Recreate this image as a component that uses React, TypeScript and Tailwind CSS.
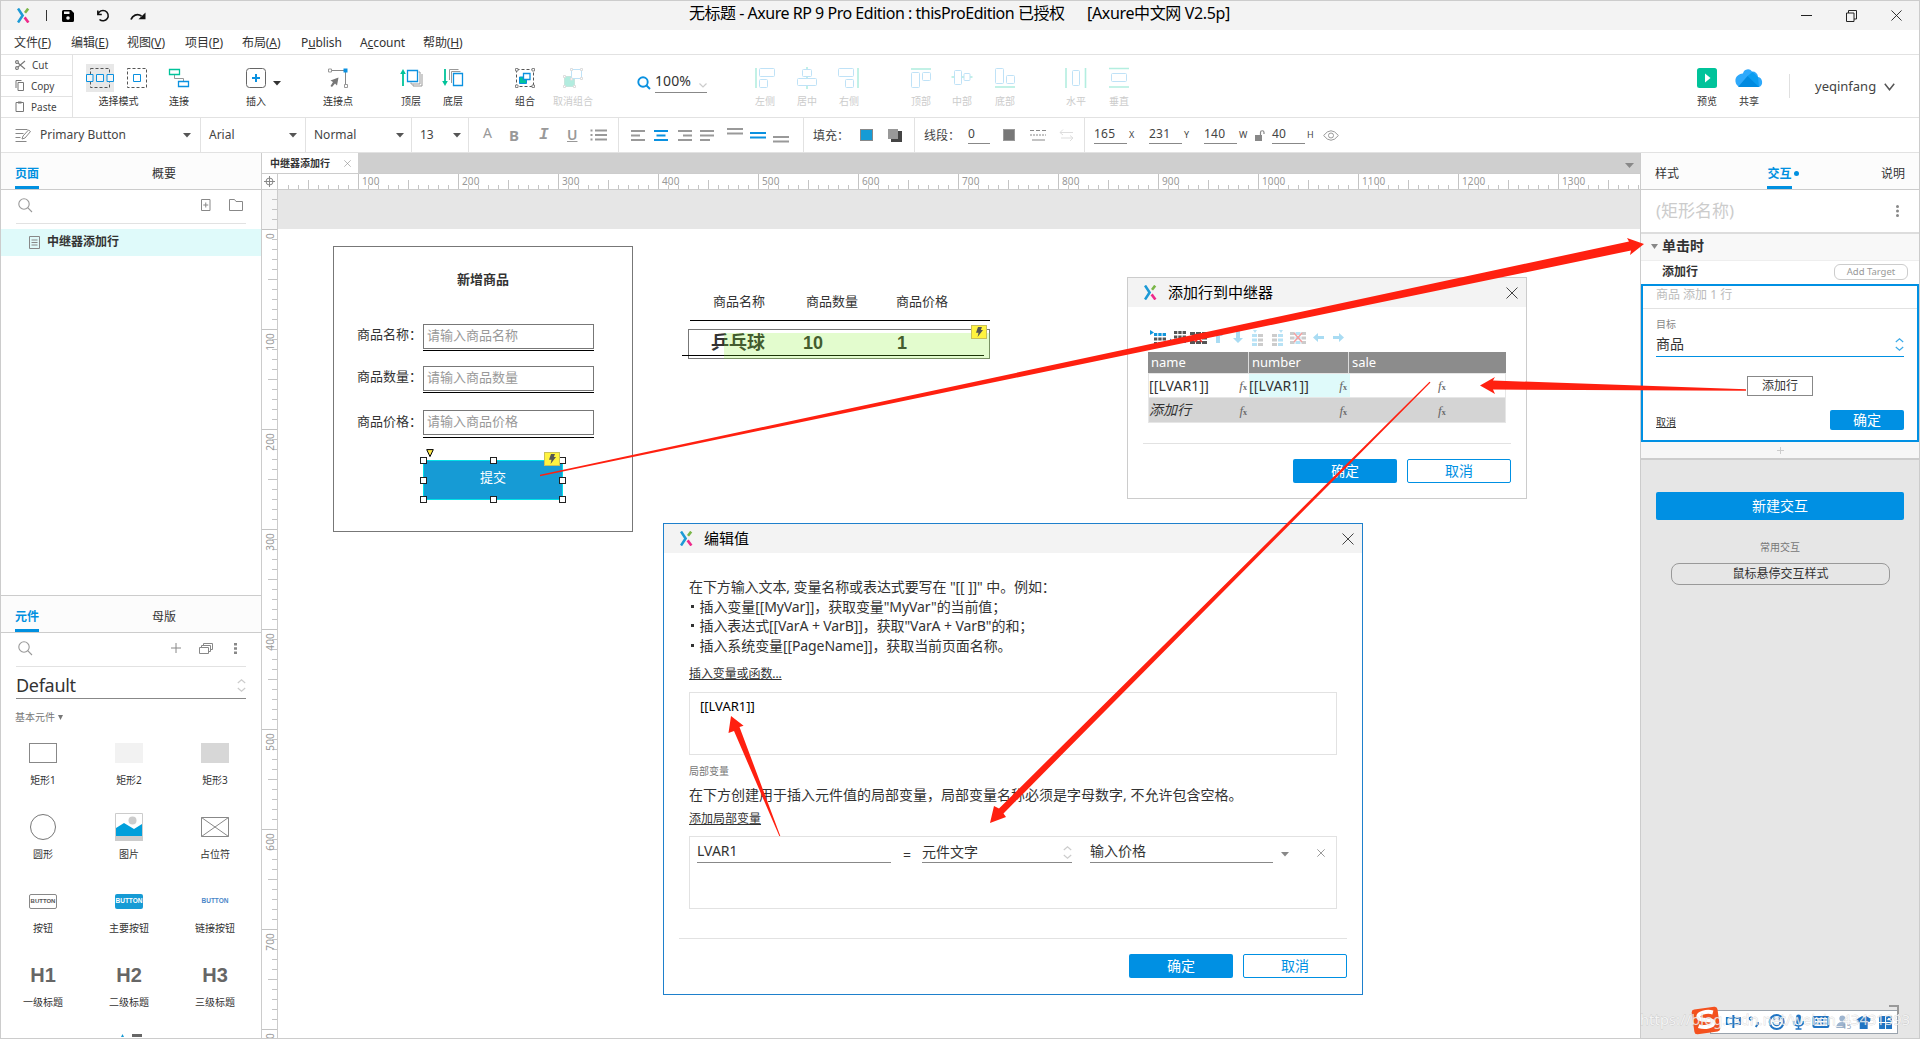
import type { ReactNode } from "react";

const xTicks = Array.from({ length: 136 }, (_, i) => i + 3);
const yTicks = Array.from({ length: 84 }, (_, i) => i - 3);

const widgets = [
  { id: "rect1", label: "矩形1" },
  { id: "rect2", label: "矩形2" },
  { id: "rect3", label: "矩形3" },
  { id: "circle", label: "圆形" },
  { id: "image", label: "图片" },
  { id: "placeholder", label: "占位符" },
  { id: "button", label: "按钮" },
  { id: "primary", label: "主要按钮" },
  { id: "link", label: "链接按钮" },
  { id: "h1", label: "一级标题" },
  { id: "h2", label: "二级标题" },
  { id: "h3", label: "三级标题" },
];

const formRows = [
  { label: "商品名称：", hint: "请输入商品名称", labelTop: "top-[98px]", inputTop: "top-[95px]", lineTop: "top-[121px]" },
  { label: "商品数量：", hint: "请输入商品数量", labelTop: "top-[140px]", inputTop: "top-[137px]", lineTop: "top-[163px]" },
  { label: "商品价格：", hint: "请输入商品价格", labelTop: "top-[185px]", inputTop: "top-[181px]", lineTop: "top-[208px]" },
];

const handles = [
  "left-[162px] top-[228px]",
  "left-[232px] top-[228px]",
  "left-[301px] top-[228px]",
  "left-[162px] top-[248px]",
  "left-[301px] top-[248px]",
  "left-[162px] top-[267px]",
  "left-[232px] top-[267px]",
  "left-[301px] top-[267px]",
];

function Logo() {
  return (
    <svg width="13" height="15" viewBox="0 0 13 15" fill="none" strokeWidth="2.6">
      <path d="M1 .5 5.600 7.500 1 14.500" stroke="#1d9ad6" />
      <path d="M8 4.800 11.200 .6" stroke="#7ab648" />
      <path d="M7.600 9.400 11.400 14.500" stroke="#ee2a8b" />
    </svg>
  );
}

function Caret({ color = "#555" }: { color?: string }) {
  return (
    <svg width="8" height="5" viewBox="0 0 8 5" className="shrink-0">
      <path d="M0 0h8L4 4.600z" fill={color} />
    </svg>
  );
}

function UpDown({ color = "#ccc" }: { color?: string }) {
  return (
    <svg width="9" height="13" viewBox="0 0 9 13" fill="none" stroke={color} strokeWidth="1.2" className="shrink-0">
      <path d="M.8 4 4.500.8 8.200 4M.8 9l3.700 3.200L8.200 9" />
    </svg>
  );
}

function SearchIcon() {
  return (
    <svg width="15" height="15" viewBox="0 0 15 15" fill="none" stroke="#999" strokeWidth="1.1">
      <circle cx="6" cy="6" r="5.200" />
      <path d="m9.700 9.700 4.300 4.300" />
    </svg>
  );
}

function CloseX({ size = 12, color = "#444" }: { size?: number; color?: string }) {
  return (
    <svg width={size} height={size} viewBox="0 0 12 12" stroke={color} strokeWidth="1" fill="none">
      <path d="m.5.5 11 11M11.500.5l-11 11" />
    </svg>
  );
}

function Bolt({ className }: { className: string }) {
  return (
    <div className={`absolute flex h-[14px] w-4 items-center justify-center border border-[#c9c05a] bg-[#fff33f] ${className}`}>
      <svg width="7" height="10" viewBox="0 0 7 10">
        <path d="M2 0h4L4.800 3H7L1.600 10l.9-4.300H0z" fill="#555" />
      </svg>
    </div>
  );
}

function Tool({ className, label, dim, children }: { className: string; label?: string; dim?: boolean; children: ReactNode }) {
  return (
    <div className={`flex shrink-0 flex-col items-center ${className}`}>
      <div className="flex h-7 items-center">{children}</div>
      <div className={`mt-[4px] h-[10px] text-[10px] leading-[10px] ${dim ? "text-[#ccc]" : "text-[#333]"}`}>{label}</div>
    </div>
  );
}

function Icon28({ children }: { children: ReactNode }) {
  return (
    <svg width="28" height="28" viewBox="0 0 28 28" fill="none">
      {children}
    </svg>
  );
}

function Title() {
  return (
    <div className="flex h-[29px] items-center bg-[#f3f3f3] pl-4">
      <Logo />
      <div className="ml-4 h-[11px] w-px bg-[#333]" />
      <svg className="ml-[15px]" width="12" height="12" viewBox="0 0 12 12">
        <path d="M0 1.500A1.500 1.500 0 0 1 1.500 0H9l3 3v7.500A1.500 1.500 0 0 1 10.500 12h-9A1.500 1.500 0 0 1 0 10.500z" fill="#000" />
        <path d="M2 1.500h5.500V4H2z" fill="#f3f3f3" />
        <circle cx="6" cy="8" r="1.800" fill="#f3f3f3" />
      </svg>
      <svg className="ml-[22px]" width="14" height="13" viewBox="0 0 14 13" fill="none" stroke="#111" strokeWidth="1.500">
        <path d="M2 5.200A5.200 5.200 0 1 1 3.500 10.500M1.800 1.500v4h4" />
      </svg>
      <svg className="ml-[20px]" width="16" height="10" viewBox="0 0 16 10">
        <path d="M1 8.500C2.500 4.500 7 2 11.500 5" fill="none" stroke="#111" strokeWidth="1.800" />
        <path d="M15.500 1.500V8.300H8.500z" fill="#111" />
      </svg>
      <div className="ml-[543px] w-[398px] pb-[5px] text-[16px] leading-5 tracking-[-0.48px] text-black">
        无标题 - Axure RP 9 Pro Edition : thisProEdition 已授权
      </div>
      <div className="pb-[5px] text-[16px] leading-5 tracking-[-0.35px] text-black">[Axure中文网 V2.5p]</div>
      <div className="ml-auto flex items-center gap-[34px] pr-[17px]">
        <div className="h-px w-[11px] bg-[#222]" />
        <svg width="11" height="12" viewBox="0 0 11 12" fill="none" stroke="#222">
          <path d="M.5 3h7.500v8.500H.5zM2.500 3V.5h8V9H8" />
        </svg>
        <CloseX size={11} color="#222" />
      </div>
    </div>
  );
}

function Menu() {
  const items = [
    { name: "文件", k: "F", w: "w-[57px]" },
    { name: "编辑", k: "E", w: "w-[56px]" },
    { name: "视图", k: "V", w: "w-[58px]" },
    { name: "项目", k: "P", w: "w-[57px]" },
    { name: "布局", k: "A", w: "w-[59px]" },
  ];
  return (
    <div className="flex h-[25px] items-center border-b border-[#e2e2e2] pl-[13px] pt-[2px] text-xs tracking-[-0.1px] text-[#333]">
      {items.map((m) => (
        <div key={m.k} className={`shrink-0 ${m.w}`}>
          {m.name}(<u>{m.k}</u>)
        </div>
      ))}
      <div className="w-[59px]">P<u>u</u>blish</div>
      <div className="w-[63px]">A<u>c</u>count</div>
      <div>帮助(<u>H</u>)</div>
    </div>
  );
}

function Toolbar() {
  return (
    <div className="flex h-[63px] border-b border-[#e2e2e2]">
      <div className="flex w-[72px] flex-col border-r border-[#e2e2e2] text-[10px] leading-[14px] text-[#444]">
        <div className="flex h-[21px] items-center border-b border-[#e2e2e2] pb-px pl-[14px]">
          <svg width="11" height="10" viewBox="0 0 11 10" fill="none" stroke="#777" strokeWidth="1.1">
            <circle cx="2" cy="2" r="1.400" />
            <circle cx="2" cy="8" r="1.400" />
            <path d="M3 3l7 6M3 7l7-6" />
          </svg>
          <span className="ml-[6px]">Cut</span>
        </div>
        <div className="flex h-[21px] items-center border-b border-[#e2e2e2] pb-px pl-[14px]">
          <svg width="10" height="11" viewBox="0 0 10 11" fill="none" stroke="#777">
            <path d="M3 2.500h5.500v8H3zM1 8V.5h5.500" />
          </svg>
          <span className="ml-[6px]">Copy</span>
        </div>
        <div className="flex h-[20px] items-center pb-px pl-[14px]">
          <svg width="10" height="11" viewBox="0 0 10 11" fill="none" stroke="#777">
            <path d="M1 1.500h7.500v9H1z" />
            <path d="M3 1.500h3.500" strokeWidth="2" />
          </svg>
          <span className="ml-[6px]">Paste</span>
        </div>
      </div>

      <div className="flex pt-[9px]">
        <Tool className="ml-[13px] w-[65px]" label="选择模式">
          <div className="flex gap-[9px]">
            <div className="bg-[#e8e8e8]">
              <Icon28>
                <path d="M4.500 4.500h19v19h-19z" stroke="#555" strokeDasharray="3 2" />
                <path d="M.5 10.500h6.500v7H.5zM10.500 10.500h7v7h-7zM21 10.500h6.500v7H21z" stroke="#0a91e0" fill="#f4f4f4" />
              </Icon28>
            </div>
            <Icon28>
              <path d="M4.500 4.500h19v19h-19z" stroke="#555" strokeDasharray="3 2" />
              <path d="M10.500 10.500h7v7h-7z" stroke="#0a91e0" />
            </Icon28>
          </div>
        </Tool>
        <Tool className="ml-[14px] w-7" label="连接">
          <Icon28>
            <path d="M9.500 10v4.500h9V18" stroke="#999" />
            <path d="M4.500 5.500h10v5h-10z" stroke="#00c39a" strokeWidth="1.300" />
            <path d="M13.500 17.500h10v5h-10z" stroke="#0a91e0" strokeWidth="1.300" />
          </Icon28>
        </Tool>
        <Tool className="ml-[49px] w-7" label="插入">
          <Icon28>
            <rect x="4.500" y="4.500" width="19" height="19" rx="3" stroke="#666" />
            <path d="M14 10v8M10 14h8" stroke="#0a91e0" strokeWidth="2" />
          </Icon28>
        </Tool>
        <Tool className="ml-[2px] w-[9px]">
          <div className="pt-[11px]"><Caret color="#333" /></div>
        </Tool>
        <Tool className="ml-[37px] w-10" label="连接点">
          <Icon28>
            <path d="M6 6.500h15.500V22" stroke="#888" />
            <path d="M4.500 5h3v3h-3zM20.500 20.500h3v3h-3z" stroke="#999" fill="#fff" />
            <path d="M19.500 4.500h4v4h-4z" fill="#0a91e0" />
            <path d="M14.500 13.500 6.500 16.500l2.500 1.500-2.500 4 1.500 1 3-3.500 2 2z" fill="#777" />
          </Icon28>
        </Tool>
        <Tool className="ml-[39px] w-7" label="顶层">
          <Icon28>
            <path d="M6 22V9" stroke="#00c39a" strokeWidth="1.800" />
            <path d="M3.200 10 6 5l2.800 5z" fill="#00c39a" />
            <path d="M14 18.500v1.500h9V8h-1.500M16 20.500v1.500h9V10" stroke="#999" />
            <path d="M10.500 6.500h10v11h-10z" stroke="#0a91e0" strokeWidth="1.300" fill="#fff" />
          </Icon28>
        </Tool>
        <Tool className="ml-[14px] w-7" label="底层">
          <Icon28>
            <path d="M6 5v13" stroke="#00c39a" strokeWidth="1.800" />
            <path d="M3.200 17 6 22l2.800-5z" fill="#00c39a" />
            <path d="M10.500 16V5.500h9M12.500 19V7.500h9" stroke="#999" />
            <path d="M14.500 9.500h9v12h-9z" stroke="#0a91e0" strokeWidth="1.300" fill="#fff" />
          </Icon28>
        </Tool>
        <Tool className="ml-[44px] w-7" label="组合">
          <Icon28>
            <path d="M5.500 5.500h17v17h-17z" stroke="#555" strokeDasharray="3 2" />
            <path d="M8.500 13h7v6.500h-7z" fill="#00c39a" stroke="#0a91e0" />
            <path d="M12.500 9.500h6.500v6h-6.500z" fill="#fff" stroke="#0a91e0" strokeWidth="1.300" />
            <path d="M4.500 4.500h2.500v2.500H4.500zM21 4.500h2.500v2.500H21zM4.500 21h2.500v2.500H4.500zM21 21h2.500v2.500H21z" stroke="#888" fill="#fff" />
          </Icon28>
        </Tool>
        <Tool className="ml-[12px] w-11" label="取消组合" dim>
          <Icon28>
            <path d="M5.500 12.500h10v10h-10z" fill="#b2ecdf" stroke="#c5e6dd" />
            <path d="M12.500 5.500h10v9h-10z" fill="#fff" stroke="#bfe2f7" />
            <path d="M11.500 4.500h2v2h-2zM21.500 4.500h2v2h-2zM21.500 13.500h2v2h-2zM4.500 11.500h2v2h-2zM4.500 21.500h2v2h-2zM14.500 21.500h2v2h-2zM11.500 14h2v2h-2z" stroke="#ddd" fill="#fff" />
          </Icon28>
        </Tool>

        <div className="ml-[42px] flex h-[29px] w-[70px] items-start">
          <svg className="mt-[12px] shrink-0" width="14" height="14" viewBox="0 0 14 14" fill="none" stroke="#0a91e0" strokeWidth="1.900">
            <circle cx="6" cy="6" r="4.700" />
            <path d="m9.500 9.500 3.500 3.500" />
          </svg>
          <div className="ml-[4px] flex h-[29px] w-[52px] items-center justify-between border-b border-[#888] pt-[5px] text-sm text-[#333]">
            <span className="tracking-[0.1px]">100%</span>
            <svg className="mt-[9px]" width="8" height="5" viewBox="0 0 8 5" fill="none" stroke="#ccc" strokeWidth="1.200">
              <path d="m.5.5 3.500 3.500L7.500.5" />
            </svg>
          </div>
        </div>

        <Tool className="ml-[44px] w-7" label="左侧" dim>
          <Icon28>
            <path d="M5 4v20" stroke="#b3eee0" strokeWidth="1.600" />
            <rect x="8.500" y="4.500" width="15" height="8" rx="1" stroke="#bfe2f7" />
            <rect x="8.500" y="15.500" width="8" height="8" rx="1" stroke="#bfe2f7" />
          </Icon28>
        </Tool>
        <Tool className="ml-[14px] w-7" label="居中" dim>
          <Icon28>
            <path d="M14 3v22" stroke="#b3eee0" strokeWidth="1.600" />
            <rect x="9.500" y="5.500" width="9" height="7" rx="1" stroke="#bfe2f7" fill="#fff" />
            <rect x="4.500" y="14.500" width="19" height="7" rx="1" stroke="#bfe2f7" fill="#fff" />
          </Icon28>
        </Tool>
        <Tool className="ml-[14px] w-7" label="右侧" dim>
          <Icon28>
            <path d="M23 4v20" stroke="#b3eee0" strokeWidth="1.600" />
            <rect x="3.500" y="4.500" width="15" height="8" rx="1" stroke="#bfe2f7" />
            <rect x="10.500" y="15.500" width="8" height="8" rx="1" stroke="#bfe2f7" />
          </Icon28>
        </Tool>
        <Tool className="ml-[44px] w-7" label="顶部" dim>
          <Icon28>
            <path d="M4 5h20" stroke="#b3eee0" strokeWidth="1.600" />
            <rect x="4.500" y="8.500" width="8" height="15" rx="1" stroke="#bfe2f7" />
            <rect x="15.500" y="8.500" width="8" height="8" rx="1" stroke="#bfe2f7" />
          </Icon28>
        </Tool>
        <Tool className="ml-[13px] w-7" label="中部" dim>
          <Icon28>
            <path d="M3.500 13h21" stroke="#b3eee0" strokeWidth="1.600" />
            <rect x="6.500" y="6.500" width="7" height="14" rx="1" stroke="#bfe2f7" fill="#fff" />
            <rect x="16" y="9.500" width="6" height="7" rx="1" stroke="#bfe2f7" fill="#fff" />
          </Icon28>
        </Tool>
        <Tool className="ml-[15px] w-7" label="底部" dim>
          <Icon28>
            <path d="M4 23h20" stroke="#b3eee0" strokeWidth="1.600" />
            <rect x="4.500" y="4.500" width="8" height="15" rx="1" stroke="#bfe2f7" />
            <rect x="15.500" y="11.500" width="8" height="8" rx="1" stroke="#bfe2f7" />
          </Icon28>
        </Tool>
        <Tool className="ml-[43px] w-7" label="水平" dim>
          <Icon28>
            <path d="M4 4v20M23.500 4v20" stroke="#b3eee0" strokeWidth="1.600" />
            <rect x="10.500" y="6.500" width="7" height="15" rx="1" stroke="#bfe2f7" />
          </Icon28>
        </Tool>
        <Tool className="ml-[15px] w-7" label="垂直" dim>
          <Icon28>
            <path d="M4 4.500h20M4 23h20" stroke="#b3eee0" strokeWidth="1.600" />
            <rect x="6.500" y="9.500" width="15" height="8" rx="1" stroke="#bfe2f7" />
          </Icon28>
        </Tool>

        <Tool className="ml-[560px] w-7" label="预览">
          <Icon28>
            <rect x="4" y="4" width="20" height="20" rx="2.500" fill="#00c39a" />
            <path d="M12 9.500 17.500 14 12 18.500z" fill="#fff" />
          </Icon28>
        </Tool>
        <Tool className="ml-[13px] w-[30px]" label="共享">
          <svg width="30" height="28" viewBox="0 0 30 28">
            <path d="M6 23A6 6.500 0 0 1 4.500 11 6 6 0 0 1 9 9.500 5 5 0 0 1 18 7.500 5.500 5.500 0 0 1 24 13 5.300 5.300 0 0 1 25 23z" fill="#2ea9fb" />
            <path d="M13.500 12 18.500 8 24 13 25 23H14z" fill="#0b9df0" />
            <path d="M4 23 13.500 12 25 23z" fill="#008ae0" />
          </svg>
        </Tool>
        <div className="ml-[25px] mt-[10px] h-6 w-px bg-[#e0e0e0]" />
        <div className="ml-[25px] flex h-[45px] items-center text-[13px] text-[#444]">
          <span className="w-[69px]">yeqinfang</span>
          <svg width="11" height="8" viewBox="0 0 11 8" fill="none" stroke="#555" strokeWidth="1.500">
            <path d="m.8.8 4.700 5.900L10.200.8" />
          </svg>
        </div>
      </div>
    </div>
  );
}

function NumField({ value, unit, w }: { value: string; unit: string; w: string }) {
  return (
    <div className={`flex h-[18px] shrink-0 items-end ${w}`}>
      <div className="flex h-[18px] w-[33px] items-start border-b border-[#888] leading-[16px] tracking-[0.2px]">{value}</div>
      <span className="ml-[2px] pb-[4px] text-[9px] leading-[10px]">{unit}</span>
    </div>
  );
}

function FormatBar() {
  return (
    <div className="flex h-[35px] items-stretch border-b border-[#e2e2e2] text-xs text-[#444]">
      <div className="flex w-[200px] items-center border-r border-[#e2e2e2] pl-[14px]">
        <svg width="16" height="15" viewBox="0 0 16 15" fill="none" stroke="#888">
          <path d="M.5 1.500h12M.5 5.500h8M.5 9.500h5M.5 13.500h11M7 11l1-3 5.500-6 2 1.500-5.500 6.500z" />
        </svg>
        <span className="ml-[9px] w-[143px] pb-px">Primary Button</span>
        <Caret />
      </div>
      <div className="flex w-[105px] items-center border-r border-[#e2e2e2] pl-[8px]">
        <span className="w-[80px] pb-px">Arial</span>
        <Caret />
      </div>
      <div className="flex w-[106px] items-center border-r border-[#e2e2e2] pl-2">
        <span className="w-[82px] pb-px">Normal</span>
        <Caret />
      </div>
      <div className="flex w-[57px] items-center border-r border-[#e2e2e2] pl-[8px]">
        <span className="w-[33px] pb-px">13</span>
        <Caret />
      </div>
      <div className="flex w-[150px] items-center border-r border-[#e2e2e2] pl-[14px] text-[#999]">
        <span className="w-[26px] pb-1 text-sm leading-none">A</span>
        <span className="w-[30px] text-[15px] font-bold leading-none">B</span>
        <span className="w-[28px] font-['Liberation_Mono'] text-[16px] font-bold italic leading-none">I</span>
        <span className="w-[23px] text-[14px] font-semibold leading-none underline">U</span>
        <svg width="17" height="12" viewBox="0 0 17 12" stroke="#999" strokeWidth="1.800">
          <path d="M5 1.500h12M5 6h12M5 10.500h12M.5 1.500h2M.5 6h2M.5 10.500h2" />
        </svg>
      </div>
      <div className="flex w-[185px] items-center border-r border-[#e2e2e2] pl-3">
        <svg width="160" height="16" viewBox="0 0 160 16" strokeWidth="2">
          <path d="M0 4h14M0 8.500h9M0 13h14M47 4h14M52 8.500h9M47 13h14M69 4h14M69 8.500h14M69 13h10" stroke="#999" />
          <path d="M23 4h14M25.500 8.500h9M23 13h14M119 6h16M119 10.500h16" stroke="#0a91e0" />
          <path d="M96 2h16M96 6.500h16M142 10h16M142 14.500h16" stroke="#999" />
        </svg>
      </div>
      <div className="flex w-[111px] items-center border-r border-[#e2e2e2] pl-[9px]">
        <span className="w-[47px] pt-px">填充：</span>
        <div className="h-3 w-[13px] border border-[#888] bg-[#169bd5]" />
        <svg className="ml-[15px]" width="14" height="14" viewBox="0 0 14 14">
          <path d="M3 3h11v11H3z" fill="#444" />
          <path d="M0 1h10v10H0z" fill="#999" />
        </svg>
      </div>
      <div className="flex w-[170px] items-center border-r border-[#e2e2e2] pl-[9px]">
        <span className="w-[44px] pt-px">线段：</span>
        <div className="h-[18px] w-[22px] border-b border-[#888] leading-[16px]">0</div>
        <div className="ml-[13px] h-3 w-3 border border-[#999] bg-[#777]" />
        <svg className="ml-[15px]" width="45" height="12" viewBox="0 0 45 12" fill="none">
          <path d="M0 1.500h16" stroke="#888" strokeDasharray="4 2" />
          <path d="M0 6h16" stroke="#888" strokeDasharray="2 1" />
          <path d="M2 11h13" stroke="#888" />
          <path d="M33 .5 30 3.500l3 2.500M30 3.500h13M40 6.500l3 2.500-3 3M43 9H31" stroke="#ddd" />
        </svg>
      </div>
      <div className="flex items-center pl-[9px]">
        <NumField value="165" unit="X" w="w-[55px]" />
        <NumField value="231" unit="Y" w="w-[55px]" />
        <NumField value="140" unit="W" w="w-[51px]" />
        <svg className="mr-[7px]" width="10" height="11" viewBox="0 0 10 11">
          <path d="M0 5h7v6H0z" fill="#888" />
          <path d="M5.500 5V2.500A1.700 1.700 0 0 1 9 2.500V4" fill="none" stroke="#888" strokeWidth="1.200" />
        </svg>
        <NumField value="40" unit="H" w="w-[51px]" />
        <svg width="16" height="11" viewBox="0 0 16 11" fill="none" stroke="#999">
          <path d="M.6 5.500Q8-4 15.400 5.500 8 15 .6 5.500z" />
          <circle cx="8" cy="5.500" r="2.500" />
        </svg>
      </div>
    </div>
  );
}

function PanelTabs({ active, other }: { active: string; other: string }) {
  return (
    <div className="flex h-[37px] items-stretch border-b border-[#ccc] bg-[#fcfcfc] pl-[14px] text-xs text-[#333]">
      <div className="h-[36px] w-6 border-b-[3px] border-[#0090e0] pt-[5px] font-bold leading-8 text-[#0090e0]">{active}</div>
      <div className="ml-[113px] pt-[5px] leading-8">{other}</div>
    </div>
  );
}

function WidgetIcon({ id }: { id: string }) {
  switch (id) {
    case "rect1":
      return <div className="h-5 w-7 border border-[#888]" />;
    case "rect2":
      return <div className="h-5 w-7 bg-[#f2f2f2]" />;
    case "rect3":
      return <div className="h-5 w-7 bg-[#d7d7d7]" />;
    case "circle":
      return <div className="h-[26px] w-[26px] rounded-full border border-[#777]" />;
    case "image":
      return (
        <svg width="28" height="28" viewBox="0 0 28 28">
          <path d="M.5.5h27v27H.5z" fill="#fff" stroke="#ccc" />
          <path d="M0 23h28v5H0z" fill="#ccc" />
          <circle cx="17.500" cy="7.500" r="4" fill="#ccc" />
          <path d="M1 15 9 10l10 6 8-5v12H1z" fill="#009fdb" />
        </svg>
      );
    case "placeholder":
      return (
        <svg width="28" height="20" viewBox="0 0 28 20" fill="none" stroke="#888">
          <path d="M.5.5h27v19H.5zM.5.5l27 19M27.500.5l-27 19" />
        </svg>
      );
    case "button":
      return <div className="flex h-[15px] w-7 items-center justify-center rounded-xs border border-[#888] font-['Liberation_Sans'] text-[6px] font-bold text-[#555]">BUTTON</div>;
    case "primary":
      return <div className="flex h-[15px] w-7 items-center justify-center rounded-xs bg-[#169bd5] font-['Liberation_Sans'] text-[6.500px] font-bold text-white">BUTTON</div>;
    case "link":
      return <div className="font-['Liberation_Sans'] text-[6.500px] font-bold text-[#4a86c8]">BUTTON</div>;
    default:
      return <div className="font-['Liberation_Sans'] text-xl font-bold uppercase text-[#666]">{id}</div>;
  }
}

function LeftPanel() {
  return (
    <div className="flex w-[261px] shrink-0 flex-col border-r border-[#ccc]">
      <PanelTabs active="页面" other="概要" />
      <div className="mx-[15px] flex h-[34px] items-center border-b border-[#e2e2e2] pl-[2px] pb-[4px]">
        <div className="pt-px"><SearchIcon /></div>
        <svg className="ml-[168px]" width="10" height="12" viewBox="0 0 10 12" fill="none" stroke="#888">
          <path d="M.5.5h8.500v11H.5zM4.750 3.500v5M2.250 6h5" />
        </svg>
        <svg className="ml-[18px]" width="14" height="12" viewBox="0 0 14 12" fill="none" stroke="#888">
          <path d="M.5.5h5l1.500 2h6.500v9H.5z" />
        </svg>
      </div>
      <div className="mt-[5px] flex h-[27px] items-center bg-[#dffafa] pl-[28px]">
        <svg width="11" height="13" viewBox="0 0 11 13" fill="none" stroke="#888">
          <path d="M.5.5h10v12H.5zM2.500 4h6M2.500 6.500h6M2.500 9h6" />
        </svg>
        <span className="ml-[7px] pb-px text-xs font-bold leading-none text-[#333]">中继器添加行</span>
      </div>
      <div className="mt-[339px] border-t border-[#ccc]">
        <PanelTabs active="元件" other="母版" />
      </div>
      <div className="mx-[15px] flex h-[34px] items-center border-b border-[#e2e2e2] pl-[2px] pb-[3px]">
        <SearchIcon />
        <svg className="ml-[138px]" width="10" height="10" viewBox="0 0 10 10" stroke="#888">
          <path d="M5 0v10M0 5h10" />
        </svg>
        <svg className="ml-[18px]" width="14" height="11" viewBox="0 0 14 11" fill="none" stroke="#888">
          <path d="M.5 4.500h9v6h-9zM2.500 4.500v-2h9v6h-2M4.500 2.500v-2h9v6h-2" />
        </svg>
        <svg className="ml-[21px]" width="3" height="11" viewBox="0 0 3 11" fill="#888">
          <path d="M0 0h3v2.500H0zM0 4.250h3v2.500H0zM0 8.500h3V11H0z" />
        </svg>
      </div>
      <div className="mx-[15px] flex h-[32px] items-center justify-between border-b border-[#888] pt-[5px] text-lg leading-none tracking-[-0.3px] text-[#333]">
        <span>Default</span>
        <UpDown />
      </div>
      <div className="ml-[14px] mt-[13px] flex items-center gap-[3px] text-[10px] leading-[11px] text-[#777]">
        基本元件
        <svg width="5" height="5" viewBox="0 0 5 5"><path d="M0 0h5L2.500 5z" fill="#777" /></svg>
      </div>
      <div className="-ml-px mt-[12px] grid w-[258px] grid-cols-3">
        {widgets.map((w) => (
          <div key={w.id} className="flex h-[74px] flex-col items-center">
            <div className="flex h-[36px] items-center">
              <WidgetIcon id={w.id} />
            </div>
            <div className="mt-[4px] text-[10px] leading-[11px] text-[#333]">{w.label}</div>
          </div>
        ))}
      </div>
      <svg className="ml-[120px] mt-[3px]" width="22" height="3" viewBox="0 0 22 3">
        <path d="M0 3 1.500 0 3 3z" fill="#169bd5" />
        <path d="M11 0h10v3H11z" fill="#666" />
      </svg>
    </div>
  );
}

function TopRuler() {
  return (
    <svg width="1362" height="15" viewBox="278 0 1362 15" className="bg-white">
      {xTicks.map((t) => {
        const x = 258 + t * 10 + 0.5;
        return <path key={t} d={`M${x} ${t % 10 === 0 ? 0 : t % 5 === 0 ? 6 : 11}V15`} stroke="#c4c4c4" />;
      })}
      {Array.from({ length: 13 }, (_, i) => (i + 1) * 100).map((n) => (
        <text key={n} x={262 + n} y="11" fontSize="10" letterSpacing=".15" fill="#999">{n}</text>
      ))}
    </svg>
  );
}

function SideRuler() {
  return (
    <svg width="15" height="848" viewBox="0 190 15 848">
      <path d="M0 190h15v39H0z" fill="#f6f6f6" />
      {yTicks.map((t) => {
        const y = 229 + t * 10 + 0.5;
        return <path key={t} d={`M${t % 10 === 0 ? 0 : t % 5 === 0 ? 6 : 10} ${y}H15`} stroke="#c4c4c4" />;
      })}
      {Array.from({ length: 9 }, (_, i) => i * 100).map((n) => (
        <text key={n} transform={`translate(11.500 ${233 + n}) rotate(-90)`} textAnchor="end" fontSize="10" letterSpacing=".15" fill="#999">{n}</text>
      ))}
    </svg>
  );
}

function Fx({ className = "" }: { className?: string }) {
  return (
    <span className={`font-['Liberation_Serif'] text-[13px] italic leading-none text-[#666] ${className}`}>
      f<span className="text-[8px] font-bold not-italic">x</span>
    </span>
  );
}

function DialogButtons() {
  return (
    <div className="flex justify-end gap-[10px] text-[14px] leading-none">
      <div className="flex h-6 w-[104px] items-center justify-center rounded-xs bg-[#0090e3] text-white">确定</div>
      <div className="flex h-6 w-[104px] items-center justify-center rounded-xs border border-[#0090e3] bg-white text-[#0090e3]">取消</div>
    </div>
  );
}

function AddRowDialog() {
  return (
    <div className="absolute left-[869px] top-[48px] h-[222px] w-[400px] border border-[#ccc] bg-white">
      <div className="flex h-[29px] items-center bg-[#f3f3f3] pl-4 pr-2">
        <Logo />
        <span className="ml-[11px] text-[15px] leading-none text-black">添加行到中继器</span>
        <div className="ml-auto"><CloseX /></div>
      </div>
      <svg className="ml-[22px] mt-[23px]" width="196" height="16" viewBox="0 0 196 16">
        <path d="M4 3h3.300v3H4zM8.300 3h3.300v3H8.300zM12.600 3H16v3h-3.400z" fill="#1296db" />
        <path d="M0 0l4 2.500L0 5z" fill="#1296db" />
        <path d="M4 7.500h3.300v3H4zM8.300 7.500h3.300v3H8.300zM12.600 7.500H16v3h-3.400zM4 12h3.300v3H4zM8.300 12h3.300v3H8.300zM12.600 12H16v3h-3.400z" fill="#555" />
        <path d="M24 1h3.300v3H24zM28.300 1h3.300v3h-3.300zM32.600 1H36v3h-3.400zM24 5.500h3.300v3H24zM28.300 5.500h3.300v3h-3.300zM32.600 5.500H36v3h-3.400z" fill="#555" />
        <path d="M24 10h3.300v3H24zM28.300 10h3.300v3h-3.300zM32.600 10H36v3h-3.400zM20 8.500l3 2.500-3 3z" fill="#1296db" />
        <path d="M40 2h5v3h-5zM46 2h5v3h-5zM52 2h5v3h-5zM40 6.500h5v3h-5zM46 6.500h5v3h-5zM52 6.500h5v3h-5zM40 11h5v3h-5zM46 11h5v3h-5zM52 11h5v3h-5z" fill="#555" />
        <path d="m45 4 7 8M52 4l-7 8" stroke="#e33" strokeWidth="1.500" />
        <path d="M66 13V6h-3l5-5 5 5h-3v7z" fill="#a9dcf3" />
        <path d="M86 1v7h-3l5 5 5-5h-3V1z" fill="#a9dcf3" />
        <path d="M102 4h5v3h-5zM102 8.500h5v3h-5zM102 13h5v3h-5zM103 0h4l-2 3z" fill="#b8e2f5" />
        <path d="M108 4h5v3h-5zM108 8.500h5v3h-5zM108 13h5v3h-5z" fill="#ccc" />
        <path d="M122 4h5v3h-5zM122 8.500h5v3h-5zM122 13h5v3h-5z" fill="#ccc" />
        <path d="M128 4h5v3h-5zM128 8.500h5v3h-5zM128 13h5v3h-5zM129 0h4l-2 3z" fill="#b8e2f5" />
        <path d="M140 2h4.500v3H140zM151.500 2h4.500v3h-4.500zM140 6.500h4.500v3H140zM151.500 6.500h4.500v3h-4.500zM140 11h4.500v3H140zM151.500 11h4.500v3h-4.500z" fill="#ccc" />
        <path d="M145.500 2h5v3h-5zM145.500 6.500h5v3h-5zM145.500 11h5v3h-5z" fill="#b8e2f5" />
        <path d="m144 3 8 9M152 3l-8 9" stroke="#f5a0a0" strokeWidth="1.500" />
        <path d="M163 7.500l5-4.500v3h6v3h-6v3zM194 7.500l-5-4.500v3h-6v3h6v3z" fill="#a9dcf3" />
      </svg>
      <div className="ml-[20px] mt-[6px] w-[358px] text-[13px] leading-none text-[#333]">
        <div className="grid h-[21px] grid-cols-[101px_100px_157px] items-stretch bg-[#8c8c8c] leading-[20px] text-white">
          <div className="border-r border-[#ddd] pl-[3px]">name</div>
          <div className="border-r border-[#ddd] pl-[3px]">number</div>
          <div className="pl-[3px]">sale</div>
        </div>
        <div className="grid h-[25px] grid-cols-[100px_101px_157px] items-stretch border border-[#e6e6e6]">
          <div className="flex items-center justify-between pr-[2px] text-[14px] tracking-[0.1px]">[[LVAR1]]<Fx /></div>
          <div className="flex items-center justify-between bg-[#dffafa] pr-[3px] text-[14px] tracking-[0.1px]">[[LVAR1]]<Fx /></div>
          <div className="flex items-center pl-[88px]"><Fx /></div>
        </div>
        <div className="grid h-[25px] grid-cols-[100px_101px_157px] items-stretch border border-t-0 border-[#e6e6e6] bg-[#d4d4d4]">
          <div className="flex items-center justify-between pr-[2px] text-[14px]"><span className="italic">添加行</span><Fx /></div>
          <div className="flex items-center justify-end pr-[3px]"><Fx /></div>
          <div className="flex items-center pl-[88px]"><Fx /></div>
        </div>
      </div>
      <div className="mx-[15px] mt-[20px] border-t border-[#e2e2e2] pt-[15px]">
        <DialogButtons />
      </div>
    </div>
  );
}

function Bullet() {
  return <span className="mx-[2px] mb-[4px] inline-block h-[3px] w-[3px] bg-[#333]" />;
}

function EditValueDialog() {
  return (
    <div className="absolute left-[405px] top-[294px] h-[472px] w-[700px] border border-[#1e80cc] bg-white text-[#333]">
      <div className="flex h-[29px] items-center bg-[#f3f3f3] pl-4 pr-2">
        <Logo />
        <span className="ml-[11px] text-[15px] leading-none text-black">编辑值</span>
        <div className="ml-auto"><CloseX /></div>
      </div>
      <div className="mt-[24px] pl-[25px] text-sm leading-[19.500px] tracking-[-0.1px]">
        <p>在下方输入文本, 变量名称或表达式要写在 "[[ ]]" 中。例如：</p>
        <p><Bullet /> 插入变量[[MyVar]]，获取变量"MyVar"的当前值；</p>
        <p><Bullet /> 插入表达式[[VarA + VarB]]，获取"VarA + VarB"的和；</p>
        <p><Bullet /> 插入系统变量[[PageName]]，获取当前页面名称。</p>
      </div>
      <div className="mt-[11px] pl-[25px] text-xs leading-[16px] tracking-[-0.1px] underline">插入变量或函数...</div>
      <div className="ml-[25px] mt-[10px] h-[63px] w-[648px] border border-[#e2e2e2] pl-[10px] pt-[5px] text-[13px] leading-[16px] text-black">[[LVAR1]]</div>
      <div className="mt-[10px] pl-[25px] text-[10px] leading-[12px] text-[#777]">局部变量</div>
      <div className="mt-[8px] pl-[25px] text-sm leading-[20px]">在下方创建用于插入元件值的局部变量，局部变量名称必须是字母数字, 不允许包含空格。</div>
      <div className="mt-[6px] pl-[25px] text-xs leading-[16px] underline">添加局部变量</div>
      <div className="ml-[25px] mt-[9px] flex h-[73px] w-[648px] items-start border border-[#e2e2e2] pl-[7px] pt-[5px] text-sm">
        <div className="h-[21px] w-[194px] border-b border-[#888] leading-[18px]">LVAR1</div>
        <div className="w-[31px] pl-3 pt-1 leading-[18px]">=</div>
        <div className="flex h-[21px] w-[150px] items-center justify-between border-b border-[#888]">元件文字<UpDown /></div>
        <div className="ml-[18px] h-[21px] w-[183px] border-b border-[#888] leading-[18px]">输入价格</div>
        <div className="ml-[8px] mt-[10px]"><Caret color="#888" /></div>
        <div className="ml-[28px] mt-[7px]"><CloseX size={8} color="#666" /></div>
      </div>
      <div className="mx-[15px] mt-[29px] border-t border-[#e2e2e2] pt-[15px]">
        <DialogButtons />
      </div>
    </div>
  );
}

function Canvas() {
  return (
    <div className="relative h-[848px] w-[1362px] overflow-hidden bg-white">
      <div className="h-[39px] bg-[#e6e6e6]" />
      {/* page origin, everything below is placed in page coordinates */}
      <div className="absolute -left-[20px] top-[39px]">
        <div className="absolute left-[75px] top-[17px] h-[286px] w-[300px] border border-[#777] bg-white" />
        <div className="absolute left-[199px] top-[43px] text-[13px] font-bold leading-[14px] text-[#333]">新增商品</div>
        {formRows.map((r) => (
          <div key={r.label} className="text-[13px] leading-[14px]">
            <div className={`absolute left-[99px] text-[#333] ${r.labelTop}`}>{r.label}</div>
            <div className={`absolute left-[165px] flex h-[25px] w-[171px] items-center border border-[#777] pb-[4px] pl-[3px] text-[#999] ${r.inputTop}`}>{r.hint}</div>
            <div className={`absolute left-[165px] h-px w-[171px] bg-black ${r.lineTop}`} />
          </div>
        ))}
        <div className="absolute left-[165px] top-[231px] flex h-10 w-[140px] items-center justify-center border border-[#00e0e8] bg-[#169bd5] pb-[4px] text-[13px] text-white">提交</div>
        {handles.map((h) => (
          <div key={h} className={`absolute h-[7px] w-[7px] border border-[#222] bg-white ${h}`} />
        ))}
        <Bolt className="left-[286px] top-[223px]" />
        <svg className="absolute left-[168px] top-[220px]" width="8" height="9" viewBox="0 0 8 9">
          <path d="M.7.6h6.600L4 7.600z" fill="#ffe94a" stroke="#000" />
        </svg>

        <div className="absolute left-[455px] top-[65px] flex text-[13px] leading-[14px] text-[#333]">
          <span className="w-[93px]">商品名称</span>
          <span className="w-[90px]">商品数量</span>
          <span>商品价格</span>
        </div>
        <div className="absolute left-[432px] top-[91px] h-px w-[300px] bg-black" />
        <div className="absolute left-[430px] top-[100px] h-[30px] w-[302px] border border-[#777]" />
        <div className="absolute left-[453px] top-[104px] flex font-['Liberation_Sans','Noto_Sans_CJK_SC'] text-[18px] font-bold leading-[20px] text-[#333]">
          <span className="w-[92px]">乒乓球</span>
          <span className="w-[94px]">10</span>
          <span>1</span>
        </div>
        <div className="absolute left-[424px] top-[126px] h-px w-[302px] bg-black" />
        <div className="absolute left-[466px] top-[104px] h-[26px] w-[266px] bg-[#80f020]/22" />
        <Bolt className="left-[713px] top-[96px]" />

        <AddRowDialog />
        <EditValueDialog />
      </div>
    </div>
  );
}

function RightPanel() {
  return (
    <div className="flex w-[279px] shrink-0 flex-col border-l border-[#ccc] bg-[#e6e6e6] text-[#333]">
      <div className="flex h-[37px] justify-between border-b border-[#ccc] bg-[#fcfcfc] pl-[14px] pr-[14px] text-xs leading-8">
        <span className="pt-[5px]">样式</span>
        <div className="relative -ml-[1px] h-[36px] border-b-[3px] border-[#0090e0] pt-[5px] font-bold text-[#0090e0]">
          交互
          <span className="absolute -right-[7px] top-[18px] h-[5px] w-[5px] rounded-full bg-[#0090e0]" />
        </div>
        <span className="pt-[5px]">说明</span>
      </div>
      <div className="flex h-[44px] items-center justify-between border-b-2 border-[#ddd] bg-white pl-[15px] pr-[20px]">
        <span className="text-[17px] text-[#ccc]">(矩形名称)</span>
        <svg width="3" height="12" viewBox="0 0 3 12" fill="#888">
          <circle cx="1.500" cy="1.500" r="1.500" /><circle cx="1.500" cy="6" r="1.500" /><circle cx="1.500" cy="10.500" r="1.500" />
        </svg>
      </div>
      <div className="flex h-[27px] items-center gap-[4px] border-b border-[#eee] bg-[#f8f8f8] pb-[2px] pl-[10px] text-sm font-bold leading-none">
        <svg width="7" height="5" viewBox="0 0 7 5"><path d="M0 0h7L3.500 5z" fill="#888" /></svg>
        单击时
      </div>
      <div className="flex h-[23px] items-center justify-between bg-white pb-px pl-[21px] pr-[11px] text-xs font-bold leading-none">
        添加行
        <span className="flex h-4 w-[74px] items-center justify-center rounded-[6px] border border-[#ccc] text-[9.500px] font-normal text-[#999]">Add Target</span>
      </div>
      <div className="h-[158px] border-2 border-[#0090e3] bg-white">
        <div className="h-[23px] border-b border-[#e2e2e2] pl-[13px] text-xs leading-[18px] text-[#bbb]">商品 添加 1 行</div>
        <div className="px-[13px]">
          <div className="pt-[9px] text-[10px] leading-[12px] text-[#888]">目标</div>
          <div className="mt-[6px] flex h-[21px] items-center justify-between border-b border-[#0090e3] pb-1 text-sm leading-none">
            商品
            <UpDown color="#3aaae8" />
          </div>
        </div>
        <div className="mx-auto mt-[19px] flex h-5 w-[66px] items-center justify-center border border-[#888] text-xs">添加行</div>
        <div className="mt-[14px] flex items-center justify-between pl-[13px] pr-[13px]">
          <u className="pt-1 text-[10px]">取消</u>
          <div className="flex h-5 w-[74px] items-center justify-center rounded-xs bg-[#0090e3] text-sm leading-none text-white">确定</div>
        </div>
      </div>
      <div className="flex h-[18px] items-center justify-center border-b-2 border-[#ccc] bg-[#f6f6f6]">
        <svg width="7" height="7" viewBox="0 0 7 7" stroke="#ccc"><path d="M3.500 0v7M0 3.500h7" /></svg>
      </div>
      <div className="ml-[15px] mt-[32px] flex h-7 w-[248px] items-center justify-center rounded-xs bg-[#0090e3] text-sm leading-none text-white">新建交互</div>
      <div className="mt-[21px] text-center text-[10px] leading-[12px] text-[#777]">常用交互</div>
      <div className="ml-[30px] mt-[10px] flex h-[22px] w-[219px] items-center justify-center rounded-[8px] border border-[#999] text-xs leading-none">鼠标悬停交互样式</div>
    </div>
  );
}

function ImeBar() {
  return (
    <div className="absolute left-[1689px] top-[1003px] flex h-[30px] items-end">
      <div className="ml-[20px] flex h-[24px] w-[188px] items-center border border-[#9aa3ad] bg-white">
        <svg width="187" height="22" viewBox="1711 1011 187 22" fill="none" stroke="#1f74c4" strokeWidth="2">
          <path d="M1727 1018h13v6h-13zM1733.500 1015v13" />
          <circle cx="1751" cy="1018.500" r="1.500" strokeWidth="1.300" />
          <path d="M1758 1022v2l-2 3" />
          <circle cx="1777" cy="1022" r="7" />
          <path d="M1773.500 1022a3.500 3.500 0 0 0 7 0" strokeWidth="1.500" />
          <path d="M1774.500 1017.500v3M1779.500 1017.500v3" />
          <path d="M1799 1017v5" strokeWidth="5" strokeLinecap="round" />
          <path d="M1794 1021q0 5 5 5t5-5M1799 1026v3M1796 1029h6" strokeWidth="1.500" />
          <rect x="1814" y="1017" width="15" height="10" rx="1" />
          <path d="M1816 1020h11M1816 1023.500h11" strokeDasharray="2 1" />
          <circle cx="1843" cy="1018.500" r="3" fill="#9db4cf" stroke="none" />
          <path d="M1837 1028q0-6 6-6 2 0 3 1v5z" fill="#9db4cf" stroke="none" />
          <path d="M1863 1016l2 1.500 2-1.500 5 3-1.500 3-2-.5V1029h-8v-7l-2 .5-1.500-3z" fill="#1f74c4" stroke="none" />
          <path d="M1880 1016h6v6h-6zM1880 1023h6v6h-6zM1887 1023h6v6h-6z" fill="#1f74c4" stroke="none" />
          <path d="M1888 1017h4v4h-4z" />
          <text x="1843" y="1029" fontSize="8" fill="#8fa3bb" stroke="none">15</text>
        </svg>
      </div>
    </div>
  );
}

function Annotations() {
  return (
    <svg className="pointer-events-none absolute -left-px -top-px" width="1920" height="1039" viewBox="0 0 1920 1039">
      <g fill="#ff2010">
        <path d="M540 474.800 1629 241.500 1627 238 1644 244 1630 255 1631 250.500 540 476.200z" />
        <path d="M1746 389.300 1493 380.500 1495 377 1480 385.500 1495 394 1493 389.500 1746 390.700z" />
        <path d="M1429.500 381.800 999 808.500 994 806 990 823 1006 817 1003.500 813.500 1430.500 382.500z" />
        <path d="M779.300 836 734 731 728.500 733 731 716 743.600 725.700 739.500 727 780.300 836z" />
      </g>
      <path d="M1889 1006h9v8" fill="none" stroke="#999" strokeWidth="2" />
      <g transform="rotate(-8 1706 1021)">
        <rect x="1693" y="1008" width="26" height="25" rx="3" fill="#f4511e" />
        <path d="M1714 1013.500c-6-2.500-15-1.500-15 2.500 0 5 14 3 14 7.500 0 4-9 4.500-15 1.500" fill="none" stroke="#fff" strokeWidth="4" />
      </g>
      <text x="1640" y="1025" fontSize="14.500" fill="#fff" fillOpacity=".75" stroke="#888" strokeOpacity=".3" strokeWidth=".8" paintOrder="stroke" textLength="270">
        https://blog.csdn.net/weixin_43431393
      </text>
    </svg>
  );
}

export default function App() {
  return (
    <div className="relative h-[1039px] w-[1920px] overflow-hidden whitespace-nowrap border border-[#ccc] bg-white font-['Noto_Sans','Noto_Sans_CJK_SC',sans-serif]">
      <Title />
      <Menu />
      <Toolbar />
      <FormatBar />
      <div className="flex h-[885px]">
        <LeftPanel />
        <div className="flex w-[1378px] shrink-0 flex-col">
          <div className="flex h-[20px] items-center justify-between bg-[#cfcfcf] pr-[6px]">
            <div className="flex h-[20px] w-[96px] items-center justify-between bg-white pl-2 pr-[7px] text-[10px] font-bold leading-none text-[#333]">
              <span className="pb-px">中继器添加行</span>
              <CloseX size={7} color="#888" />
            </div>
            <svg className="mt-1" width="9" height="5" viewBox="0 0 9 5"><path d="M0 0h9L4.500 5z" fill="#888" /></svg>
          </div>
          <div className="flex h-[17px] border-y border-[#ccc]">
            <div className="flex w-4 items-center justify-center border-r border-[#ccc]">
              <svg width="11" height="11" viewBox="0 0 11 11" fill="none" stroke="#888">
                <circle cx="5.500" cy="5.500" r="3.500" />
                <path d="M5.500 0v11M0 5.500h11" />
              </svg>
            </div>
            <TopRuler />
          </div>
          <div className="flex">
            <div className="w-4 border-r border-[#ccc]">
              <SideRuler />
            </div>
            <Canvas />
          </div>
        </div>
        <RightPanel />
      </div>
      <ImeBar />
      <Annotations />
    </div>
  );
}
